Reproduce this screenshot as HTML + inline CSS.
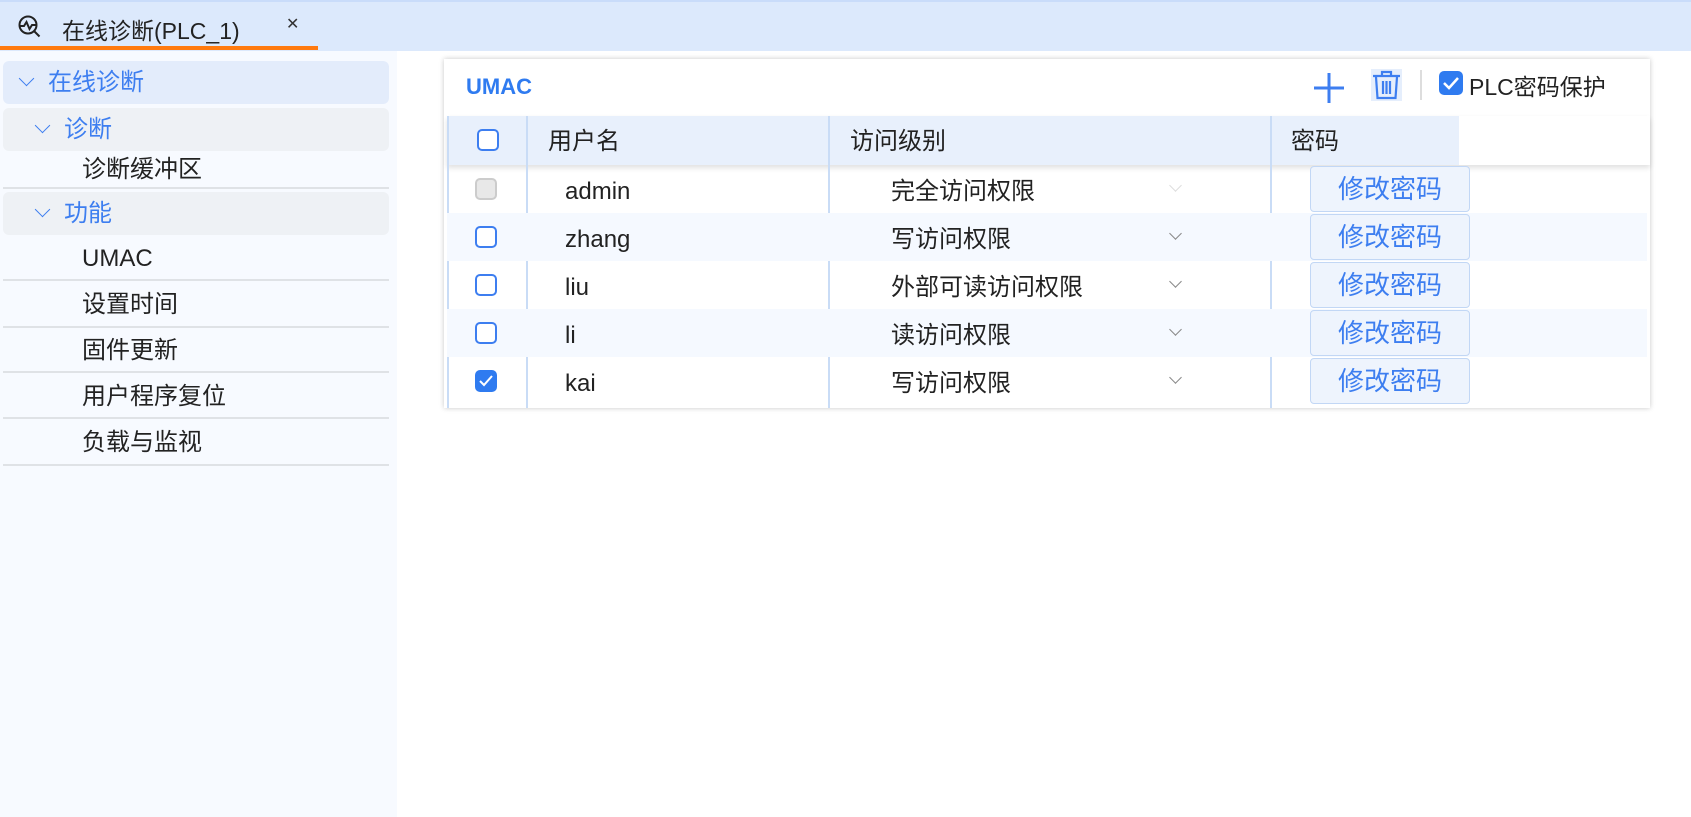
<!DOCTYPE html>
<html><head><meta charset="utf-8">
<style>
*{margin:0;padding:0;box-sizing:border-box}
body{width:1691px;height:817px;overflow:hidden;background:#fff;font-family:"Liberation Sans","Noto Sans CJK SC",sans-serif;color:#222;position:relative}
.top{position:absolute;left:0;top:0;width:1691px;height:51px;background:#dce9fc;border-top:2px solid #c9dcfa}
.tab{position:absolute;left:0;top:0;width:318px;height:51px}
.ul{position:absolute;left:0;top:46px;width:318px;height:4px;background:#ff7a0f}
.tab .t{position:absolute;left:62px;top:10px;font-size:23px;color:#222}
.tab .x{position:absolute;left:286px;top:12px;font-size:16px;color:#333}
.side{position:absolute;left:0;top:51px;width:397px;height:766px;background:#f7faff}
.it{position:absolute;left:3px;width:386px;font-size:24px}
.grp{border-radius:6px;height:43px;line-height:43px}
.sep{border-bottom:2px solid #dfe2e6}
.chev{display:inline-block;width:11px;height:11px;border-right:1.6px solid #3d7ef0;border-bottom:1.6px solid #3d7ef0;transform:rotate(45deg);margin-right:16px;position:relative;top:-6px}
.panel{position:absolute;left:444px;top:59px;width:1206px;height:349px;background:#fff;box-shadow:0 0 5px rgba(0,0,0,.22)}
.hdr{position:absolute;left:3px;top:57px;width:1203px;height:49px;background:#fff;box-shadow:0 3px 5px rgba(0,0,0,.12)}
.hdr .bg{position:absolute;left:0;top:0;width:1012px;height:49px;background:#e8f0fc}
.vl{position:absolute;width:2px;background:#c9dcf6}
.row{position:absolute;left:3px;width:1200px;height:48px}
.cb{position:absolute;width:22px;height:22px;border:2px solid #3d7ef0;border-radius:5px;background:#fff}
.txt{position:absolute;font-size:24px;line-height:48px;top:3px}
.hdr .txt{line-height:49px;top:1px}
.dd{position:absolute;width:9px;height:9px;border-right:1.5px solid #888;border-bottom:1.5px solid #888;transform:rotate(45deg)}
.btn{position:absolute;left:863px;width:160px;height:46px;border:1.5px solid #c2d7f5;border-radius:4px;background:#eef4fd;color:#3d7ef0;font-size:26px;text-align:center;line-height:45px}
</style></head><body>
<div class="top">
 <div class="tab">
  <svg style="position:absolute;left:17px;top:12px" width="26" height="26" viewBox="0 0 26 26" fill="none" stroke="#222" stroke-width="2"><circle cx="11" cy="11" r="8.5"/><path d="M3 12h4l2.5-4 3 7 2.5-4h3.5"/><path d="M17.5 17.5l5 5"/></svg>
  <div class="t">在线诊断(PLC_1)</div><div class="x">✕</div>
 </div>
</div>
<div class="ul"></div>
<div class="side">
 <div class="it grp" style="top:10px;background:#e3ecfb;color:#3d7ef0;padding-left:18px"><span class="chev"></span>在线诊断</div>
 <div class="it grp" style="top:57px;background:#eef1f5;color:#3d7ef0;padding-left:34px"><span class="chev"></span>诊断</div>
 <div class="it sep" style="top:100px;height:38px;line-height:38px;padding-left:79px">诊断缓冲区</div>
 <div class="it grp" style="top:141px;background:#eef1f5;color:#3d7ef0;padding-left:34px"><span class="chev"></span>功能</div>
 <div class="it sep" style="top:187px;height:43px;line-height:42px;padding-left:79px">UMAC</div>
 <div class="it sep" style="top:230px;height:47px;line-height:48px;padding-left:79px">设置时间</div>
 <div class="it sep" style="top:277px;height:45px;line-height:46px;padding-left:79px">固件更新</div>
 <div class="it sep" style="top:322px;height:46px;line-height:47px;padding-left:79px">用户程序复位</div>
 <div class="it sep" style="top:368px;height:47px;line-height:48px;padding-left:79px">负载与监视</div>
</div>
<div class="panel">
 <div style="position:absolute;left:22px;top:15px;font-size:22px;font-weight:bold;color:#2f7bf0">UMAC</div>
 <svg style="position:absolute;left:868px;top:12px" width="34" height="34" viewBox="0 0 34 34" stroke="#3d7ef0" stroke-width="3"><path d="M17 2v30M2 17h30"/></svg>
 <svg style="position:absolute;left:927px;top:10px" width="31" height="32" viewBox="0 0 31 32"><rect width="31" height="32" fill="#e5eefc"/><g fill="none" stroke="#3d7ef0" stroke-width="2.2"><path d="M2 7h27M11 7V3h9v4M5 8l1.5 21h18L26 8M12 12v13M15.5 12v13M19 12v13"/></g></svg>
 <div style="position:absolute;left:976px;top:11px;width:2px;height:30px;background:#ddd"></div>
 <div style="position:absolute;left:995px;top:12px;width:24px;height:24px;border-radius:5px;background:#2f7bf0"><svg width="24" height="24" viewBox="0 0 24 24" fill="none" stroke="#fff" stroke-width="2.5"><path d="M5 12l5 5 9-10"/></svg></div>
 <div style="position:absolute;left:1025px;top:9px;font-size:23px">PLC密码保护</div>
 <div class="hdr"><div class="bg"></div>
  <div class="cb" style="left:30px;top:13px"></div>
  <div class="txt" style="left:101px">用户名</div>
  <div class="txt" style="left:403px">访问级别</div>
  <div class="txt" style="left:844px">密码</div>
 </div>
 <div class="vl" style="left:3px;top:57px;height:292px"></div>
 <div class="vl" style="left:82px;top:57px;height:292px"></div>
 <div class="vl" style="left:384px;top:57px;height:292px"></div>
 <div class="vl" style="left:826px;top:57px;height:292px"></div>

 <div class="row" style="top:106px">
  <div class="cb" style="left:28px;top:13px;border-color:#ccc;background:#e8e8e8"></div>
  <div class="txt" style="left:118px">admin</div>
  <div class="txt" style="left:444px">完全访问权限</div>
  <div class="dd" style="left:724px;top:16px;border-color:#ddd"></div>
  <div class="btn" style="top:1px">修改密码</div>
 </div>
 <div class="row" style="top:154px;background:#f5f9ff">
  <div class="cb" style="left:28px;top:13px"></div>
  <div class="txt" style="left:118px">zhang</div>
  <div class="txt" style="left:444px">写访问权限</div>
  <div class="dd" style="left:724px;top:16px"></div>
  <div class="btn" style="top:1px">修改密码</div>
 </div>
 <div class="row" style="top:202px">
  <div class="cb" style="left:28px;top:13px"></div>
  <div class="txt" style="left:118px">liu</div>
  <div class="txt" style="left:444px">外部可读访问权限</div>
  <div class="dd" style="left:724px;top:16px"></div>
  <div class="btn" style="top:1px">修改密码</div>
 </div>
 <div class="row" style="top:250px;background:#f5f9ff">
  <div class="cb" style="left:28px;top:13px"></div>
  <div class="txt" style="left:118px">li</div>
  <div class="txt" style="left:444px">读访问权限</div>
  <div class="dd" style="left:724px;top:16px"></div>
  <div class="btn" style="top:1px">修改密码</div>
 </div>
 <div class="row" style="top:298px">
  <div class="cb" style="left:28px;top:13px;background:#2f7bf0;border-color:#2f7bf0"><svg width="18" height="18" viewBox="0 0 18 18" fill="none" stroke="#fff" stroke-width="2"><path d="M3 9l4 4 8-9"/></svg></div>
  <div class="txt" style="left:118px">kai</div>
  <div class="txt" style="left:444px">写访问权限</div>
  <div class="dd" style="left:724px;top:16px"></div>
  <div class="btn" style="top:1px">修改密码</div>
 </div>
</div>
</body></html>
